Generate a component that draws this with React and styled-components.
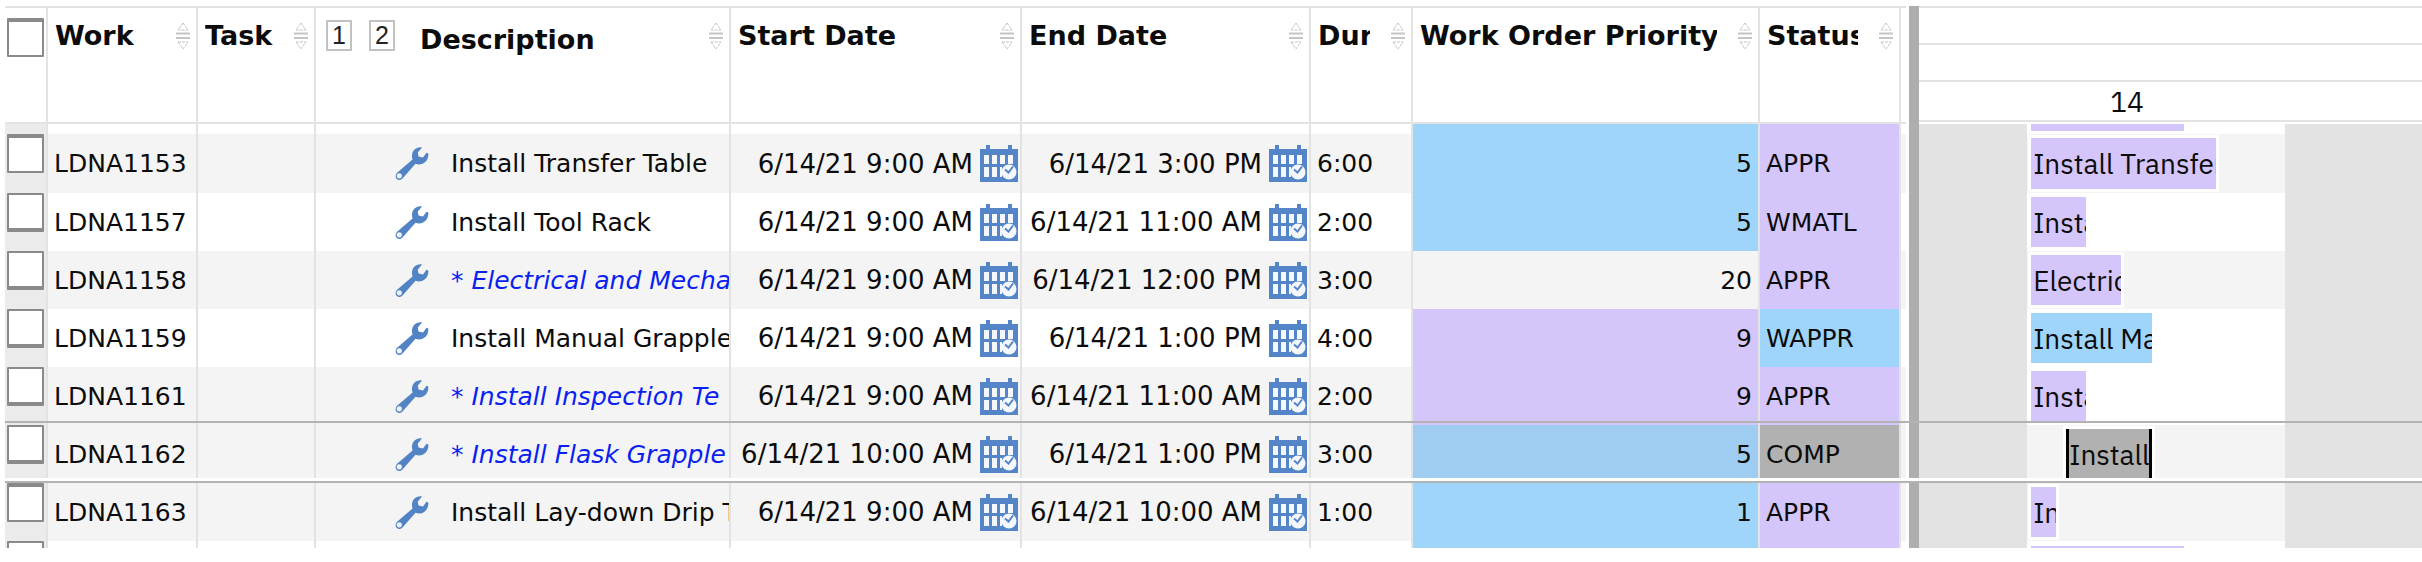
import React, { useState } from "react";
import styled, { createGlobalStyle, css } from "styled-components";

const PURPLE = "#d4c6fa";
const BLUE = "#9fd5fa";
const GRAY = "#b1b1b1";
const LINE = "#e3e3e3";

const rows = [
  {
    id: "LDNA1153",
    desc: "Install Transfer Table",
    start: "6/14/21 9:00 AM",
    end: "6/14/21 3:00 PM",
    dur: "6:00",
    priority: 5,
    priorityColor: BLUE,
    status: "APPR",
    statusColor: PURPLE,
    shade: true,
    laneShade: true,
    bar: { label: "Install Transfer Table", left: 1.6, width: 71.8 },
  },
  {
    id: "LDNA1157",
    desc: "Install Tool Rack",
    start: "6/14/21 9:00 AM",
    end: "6/14/21 11:00 AM",
    dur: "2:00",
    priority: 5,
    priorityColor: BLUE,
    status: "WMATL",
    statusColor: PURPLE,
    bar: { label: "Install Tool Rack", left: 1.6, width: 21.4 },
  },
  {
    id: "LDNA1158",
    desc: "* Electrical and Mecha",
    changed: true,
    start: "6/14/21 9:00 AM",
    end: "6/14/21 12:00 PM",
    dur: "3:00",
    priority: 20,
    status: "APPR",
    statusColor: PURPLE,
    shade: true,
    laneShade: true,
    bar: { label: "Electrical and Mecha", left: 1.6, width: 35 },
  },
  {
    id: "LDNA1159",
    desc: "Install Manual Grapple",
    start: "6/14/21 9:00 AM",
    end: "6/14/21 1:00 PM",
    dur: "4:00",
    priority: 9,
    priorityColor: PURPLE,
    status: "WAPPR",
    statusColor: BLUE,
    bar: { label: "Install Manual Grapple", left: 1.6, width: 46.8 },
  },
  {
    id: "LDNA1161",
    desc: "* Install Inspection Te",
    changed: true,
    start: "6/14/21 9:00 AM",
    end: "6/14/21 11:00 AM",
    dur: "2:00",
    priority: 9,
    priorityColor: PURPLE,
    status: "APPR",
    statusColor: PURPLE,
    shade: true,
    bar: { label: "Install Inspection Te", left: 1.6, width: 21.4 },
  },
  {
    id: "LDNA1162",
    desc: "* Install Flask Grapple",
    changed: true,
    start: "6/14/21 10:00 AM",
    end: "6/14/21 1:00 PM",
    dur: "3:00",
    priority: 5,
    priorityColor: "#9fcdf1",
    status: "COMP",
    statusColor: GRAY,
    shade: true,
    laneShade: true,
    bar: { label: "Install Flask Grapple", left: 15.2, width: 33.4, done: true },
  },
  {
    id: "LDNA1163",
    desc: "Install Lay-down Drip T",
    start: "6/14/21 9:00 AM",
    end: "6/14/21 10:00 AM",
    dur: "1:00",
    priority: 1,
    priorityColor: BLUE,
    status: "APPR",
    statusColor: PURPLE,
    shade: true,
    laneShade: true,
    bar: { label: "Install Lay-down Drip T", left: 1.6, width: 9.8 },
  },
];

const columnWidths = [43, 150, 118, 415, 291, 289, 102, 347, 141, 5];

const ROW_HEIGHT = 58;
const BODY_TOP = 129;
const SELECTED = 5;

const SortIcon = () => (
  <SortSvg viewBox="0 0 14 28" aria-hidden="true">
    <path d="M7 1 L12 8 H2 Z M2 20 H12 L7 27 Z" strokeDasharray="3 1" />
    <path d="M0 11.5 H14 M0 16 H14" strokeWidth="2" />
  </SortSvg>
);

const WrenchIcon = () => (
  <WrenchSvg viewBox="0 0 34 33" aria-hidden="true">
    <path
      d="M27 0.5 C21 -0.5 16.500 4 17 10 L17.500 12.500 L1.800 26 C-2 31 4 35.500 7.500 31.500 L20.500 16.800 C27 19.500 34 14.500 33.300 6.500 L31.500 5.800 L28 10.500 L23.500 9.500 L22.800 5.500 Z"
      fill="#5183c5"
    />
    <circle cx="4.300" cy="28.800" r="2.600" fill="#eef2f9" />
  </WrenchSvg>
);

const CalendarIcon = () => (
  <svg width="38" height="37" viewBox="0 0 38 37" aria-hidden="true">
    <path d="M0 4 H38 V37 H0 Z M6 0 H10 V5 H6 Z M28 0 H32 V5 H28 Z" fill="#5585c9" />
    <path
      d="M4 10 H9 V19 H4 Z M12 10 H17 V19 H12 Z M20 10 H25 V19 H20 Z M28 10 H33 V19 H28 Z M4 22 H9 V32 H4 Z M12 22 H17 V32 H12 Z M20 22 H22 V32 H20 Z"
      fill="#f4f7fc"
    />
    <circle cx="29" cy="27" r="7.500" fill="#f4f7fc" />
    <path d="M25 24.500 L28.500 27.500 L33 21.500" fill="none" stroke="#5585c9" strokeWidth="2" />
  </svg>
);

const HeaderCell = ({ label }) => (
  <Th scope="col">
    <HeadInner>
      <HeadLabel>{label}</HeadLabel>
      <SortIcon />
    </HeadInner>
  </Th>
);

const DateCell = ({ value }) => (
  <Td>
    <DateInner>
      {value}
      <PickButton type="button" aria-label="Pick date">
        <CalendarIcon />
      </PickButton>
    </DateInner>
  </Td>
);

const App = () => {
  const [checked, setChecked] = useState([]);

  const handleCheck = (id) => {
    setChecked((prev) =>
      prev.includes(id) ? prev.filter((v) => v !== id) : [...prev, id]
    );
  };

  const handleCheckAll = () => {
    setChecked(checked.length === rows.length ? [] : rows.map((r) => r.id));
  };

  return (
    <>
      <GlobalStyle />
      <Board>
        <GridPane>
          <Table>
            <colgroup>
              {columnWidths.map((w, i) => (
                <Col key={i} $w={w} />
              ))}
            </colgroup>
            <thead>
              <tr>
                <Th scope="col">
                  <CheckInner $head>
                    <CheckBox
                      type="checkbox"
                      aria-label="Select all"
                      $thickTop
                      checked={checked.length === rows.length}
                      onChange={handleCheckAll}
                    />
                  </CheckInner>
                </Th>
                <HeaderCell label="Work" />
                <HeaderCell label="Task" />
                <Th scope="col">
                  <HeadInner>
                    <LevelButtons>
                      <LevelButton type="button">1</LevelButton>
                      <LevelButton type="button">2</LevelButton>
                    </LevelButtons>
                    <HeadLabel $low>Description</HeadLabel>
                    <SortIcon />
                  </HeadInner>
                </Th>
                <HeaderCell label="Start Date" />
                <HeaderCell label="End Date" />
                <HeaderCell label="Dur" />
                <HeaderCell label="Work Order Priority" />
                <HeaderCell label="Status" />
                <Th $last />
              </tr>
            </thead>
            <tbody>
              <EdgeRow $h={10}>
                <CheckTd />
                <Td /><Td /><Td /><Td /><Td /><Td />
                <Td $bg={BLUE} />
                <Td $bg={PURPLE} />
                <Td $last />
              </EdgeRow>
              {rows.map((row, index) => (
                <Row key={row.id} $shade={row.shade} $first={index === 0}>
                  <CheckTd>
                    <CheckInner>
                      <CheckBox
                        type="checkbox"
                        aria-label={row.id}
                        $thickTop={index === 0 || index === 6}
                        checked={checked.includes(row.id)}
                        onChange={() => handleCheck(row.id)}
                      />
                    </CheckInner>
                  </CheckTd>
                  <Td $pad>{row.id}</Td>
                  <Td />
                  <Td>
                    <DescInner $changed={row.changed}>
                      <WrenchIcon />
                      <span>{row.desc}</span>
                    </DescInner>
                  </Td>
                  <DateCell value={row.start} />
                  <DateCell value={row.end} />
                  <Td $pad>{row.dur}</Td>
                  <Td $pad $right $bg={row.priorityColor}>
                    {row.priority}
                  </Td>
                  <Td $pad $bg={row.statusColor}>
                    {row.status}
                  </Td>
                  <Td $last />
                </Row>
              ))}
              <EdgeRow $h={7}>
                <CheckTd>
                  <CheckInner $cut>
                    <CheckBox type="checkbox" aria-label="Next row" />
                  </CheckInner>
                </CheckTd>
                <Td /><Td /><Td /><Td /><Td /><Td />
                <Td $bg={BLUE} />
                <Td $bg={PURPLE} />
                <Td $last />
              </EdgeRow>
            </tbody>
          </Table>
        </GridPane>
        <Splitter />
        <GanttPane>
          <Tier $h={39} $first />
          <Tier $h={37} />
          <Tier $h={40}>
            <DayLabel>14</DayLabel>
          </Tier>
          <Lanes>
            <Lane $h={10}>
              <OffHours />
              <Shift $flush="top">
                <Bar style={{ marginLeft: "1.6%", width: "59.4%" }} $color={PURPLE} />
              </Shift>
              <OffHours />
            </Lane>
            {rows.map(({ id, bar, laneShade, statusColor }, index) => (
              <Lane key={id} $h={index === 0 ? ROW_HEIGHT + 1 : ROW_HEIGHT}>
                <OffHours />
                <Shift $shade={laneShade}>
                  <Bar
                    style={{ marginLeft: `${bar.left}%`, width: `${bar.width}%` }}
                    $color={statusColor}
                    $done={bar.done}
                  >
                    {bar.label}
                  </Bar>
                </Shift>
                <OffHours />
              </Lane>
            ))}
            <Lane $h={7}>
              <OffHours />
              <Shift $flush="bottom">
                <Bar style={{ marginLeft: "1.6%", width: "59.4%" }} $color={PURPLE} />
              </Shift>
              <OffHours />
            </Lane>
          </Lanes>
        </GanttPane>
        <SelectionFrame
          style={{ top: BODY_TOP + SELECTED * ROW_HEIGHT - 4 }}
        />
      </Board>
    </>
  );
};

export default App;

const GlobalStyle = createGlobalStyle`
  * {
    box-sizing: border-box;
  }

  body {
    margin: 0;
    background: #fff;
    color: #0c0c0c;
    font-family: "DejaVu Sans", Verdana, sans-serif;
    font-size: 25px;
  }
`;

const Board = styled.main`
  position: relative;
  display: flex;
  margin: 6px 0 0 5px;
  overflow: hidden;
`;

const GridPane = styled.div`
  flex: none;
  margin-right: 3px;
`;

const Table = styled.table`
  table-layout: fixed;
  width: 1901px;
  border-collapse: separate;
  border-spacing: 0;
`;

const Col = styled.col`
  width: ${({ $w }) => $w}px;
`;

const Th = styled.th`
  height: 118px;
  padding: 0;
  border: solid ${LINE};
  border-width: ${({ $last }) => ($last ? "2px 0" : "2px 2px 2px 0")};
  vertical-align: top;
  text-align: left;
`;

const HeadInner = styled.div`
  display: flex;
  align-items: flex-start;
  padding: 10px 6px 0 7px;
  font-size: 27px;
  line-height: 36px;
`;

const HeadLabel = styled.span`
  flex: 1;
  min-width: 0;
  margin-right: 21px;
  padding-top: ${({ $low }) => ($low ? 4 : 0)}px;
  overflow: hidden;
  white-space: nowrap;
`;

const SortSvg = styled.svg`
  flex: none;
  width: 14px;
  height: 28px;
  margin-top: 4px;
  fill: none;
  stroke: #c4c4c4;
`;

const LevelButtons = styled.div`
  display: flex;
  gap: 17px;
  padding: 2px 25px 0 3px;
`;

const LevelButton = styled.button`
  width: 26px;
  height: 31px;
  padding: 0;
  border: 2px solid #c2c2c2;
  background: #fff;
  color: #222;
  font-family: "Liberation Sans", Arial, sans-serif;
  font-size: 25px;
  line-height: 27px;
  cursor: pointer;
`;

const Td = styled.td`
  padding: ${({ $pad }) => ($pad ? "0 6px" : 0)};
  border-right: ${({ $last }) => ($last ? "none" : `2px solid ${LINE}`)};
  background: ${({ $bg }) => $bg || "transparent"};
  text-align: ${({ $right }) => ($right ? "right" : "left")};
  white-space: nowrap;
  overflow: hidden;
`;

const CheckTd = styled(Td)`
  background: #ebebeb;
  vertical-align: top;
`;

const Row = styled.tr`
  height: ${({ $first }) => ($first ? 59 : 58)}px;
  background: ${({ $shade }) => ($shade ? "#f4f4f4" : "#fff")};
`;

const EdgeRow = styled.tr`
  height: ${({ $h }) => $h}px;
`;

const CheckInner = styled.div`
  display: flex;
  height: ${({ $cut }) => ($cut ? "7px" : "auto")};
  padding: ${({ $head }) => ($head ? "10px 0 0 2px" : "0 0 0 2px")};
  overflow: hidden;
`;

const CheckBox = styled.input`
  appearance: none;
  flex: none;
  width: 37px;
  height: 39px;
  margin: 0;
  border: 2px solid #8a8a8a;
  border-radius: 1px;
  background: #fff;
  cursor: pointer;
  ${({ $thickTop }) =>
    $thickTop
      ? css`
          border-top-width: 4px;
        `
      : css`
          border-bottom-width: 4px;
        `}

  &:checked {
    background: #5585c9;
  }
`;

const DescInner = styled.div`
  display: flex;
  align-items: center;
  gap: 22px;
  padding-left: 79px;
  ${({ $changed }) =>
    $changed &&
    css`
      color: #0a1ff0;
      font-style: italic;
    `}
`;

const WrenchSvg = styled.svg`
  flex: none;
  width: 34px;
  height: 33px;
`;

const DateInner = styled.div`
  display: flex;
  align-items: center;
  justify-content: flex-end;
  gap: 7px;
  padding-right: 2px;
  font-size: 26px;
`;

const PickButton = styled.button`
  display: flex;
  flex: none;
  padding: 0;
  border: 0;
  background: none;
  cursor: pointer;
`;

const Splitter = styled.div`
  flex: none;
  width: 10px;
  background: #aeaeae;
`;

const GanttPane = styled.section`
  flex: 1;
  min-width: 0;
  font-family: "IBM Plex Sans", "Noto Sans", sans-serif;
  font-size: 28px;
`;

const Tier = styled.div`
  display: flex;
  align-items: center;
  height: ${({ $h }) => $h}px;
  border-top: ${({ $first }) => ($first ? `2px solid ${LINE}` : "none")};
  border-bottom: 2px solid ${LINE};
`;

const DayLabel = styled.span`
  margin-left: 38%;
`;

const Lanes = styled.div`
  padding-top: 2px;
`;

const Lane = styled.div`
  display: grid;
  grid-template-columns: 108fr 258fr 137fr;
  height: ${({ $h }) => $h}px;
  overflow: hidden;
`;

const OffHours = styled.div`
  background: #e3e3e3;
`;

const Shift = styled.div`
  display: flex;
  min-width: 0;
  padding: 4px 0;
  background: ${({ $shade }) => ($shade ? "#f4f4f4" : "#fff")};
  ${({ $flush }) => $flush === "top" && "padding: 0 0 3px;"}
  ${({ $flush }) => $flush === "bottom" && "padding: 5px 0 0;"}
`;

const Bar = styled.div`
  display: flex;
  align-items: center;
  padding-left: 2px;
  overflow: hidden;
  white-space: nowrap;
  background: ${({ $color }) => $color};
  box-shadow: 0 0 0 3px #fff;
  ${({ $done }) =>
    $done &&
    css`
      border: solid #000;
      border-width: 0 3px;
      padding-left: 0;
    `}
`;

/* lines above and below the selected row, across both panes */
const SelectionFrame = styled.div`
  position: absolute;
  right: 0;
  left: 0;
  height: 62px;
  border: solid #b3b3b3;
  border-width: 2px 0;
  pointer-events: none;

  &::after {
    content: "";
    position: absolute;
    right: 0;
    bottom: 0;
    left: 0;
    height: 3px;
    background: #fff;
  }
`;
